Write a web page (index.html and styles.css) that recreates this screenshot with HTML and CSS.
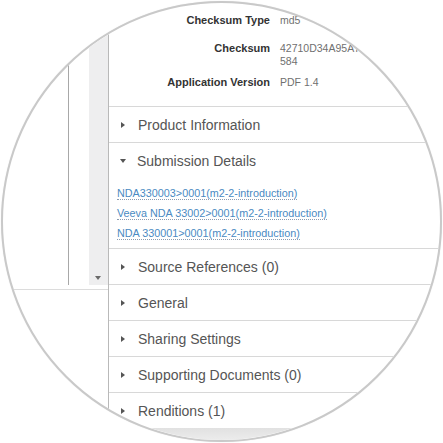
FILE: index.html
```html
<!DOCTYPE html>
<html>
<head>
<meta charset="utf-8">
<link rel="stylesheet" href="styles.css">
</head>
<body>
<div class="lens">
  <div class="page">
    <div class="sidebar">
      <div class="tree-space"></div>
      <div class="tree-line"></div>
      <div class="tree-gap"></div>
      <div class="scrollbar"><span class="arrow-down"></span></div>
    </div>
    <div class="panel">
      <div class="props">
        <div class="prop prop-first">
          <div class="label">Checksum Type</div>
          <div class="value">md5</div>
        </div>
        <div class="prop prop-second">
          <div class="label">Checksum</div>
          <div class="value">42710D34A95A7F3C0B9E81D2A6C45E<br>584</div>
        </div>
        <div class="prop">
          <div class="label">Application Version</div>
          <div class="value">PDF 1.4</div>
        </div>
      </div>
      <div class="section"><span class="tri-right"></span><span class="sec-title">Product Information</span></div>
      <div class="section section-open"><span class="tri-down"></span><span class="sec-title">Submission Details</span></div>
      <div class="links">
        <div class="link-line"><a class="link">NDA330003&gt;0001(m2-2-introduction)</a></div>
        <div class="link-line"><a class="link">Veeva NDA 33002&gt;0001(m2-2-introduction)</a></div>
        <div class="link-line"><a class="link">NDA 330001&gt;0001(m2-2-introduction)</a></div>
      </div>
      <div class="section"><span class="tri-right"></span><span class="sec-title">Source References (0)</span></div>
      <div class="section"><span class="tri-right"></span><span class="sec-title">General</span></div>
      <div class="section"><span class="tri-right"></span><span class="sec-title">Sharing Settings</span></div>
      <div class="section"><span class="tri-right"></span><span class="sec-title">Supporting Documents (0)</span></div>
      <div class="section section-last"><span class="tri-right"></span><span class="sec-title">Renditions (1)</span></div>
    </div>
  </div>
  <div class="footer"></div>
</div>
</body>
</html>
```
FILE: styles.css
```css
html, body {
  margin: 0;
  padding: 0;
  background: #ffffff;
}
body {
  width: 443px;
  height: 443px;
  overflow: hidden;
  font-family: "Liberation Sans", Arial, sans-serif;
}
.lens {
  margin: 1px 0 0 1px;
  width: 437px;
  height: 437px;
  border: 2px solid #c9c9c9;
  border-radius: 50%;
  overflow: hidden;
  background: #ffffff;
  box-shadow: 0 0 1px rgba(0, 0, 0, 0.12);
  display: flex;
  flex-direction: column;
}
.page {
  display: flex;
  flex: none;
}
.sidebar {
  width: 105px;
  height: 282px;
  padding-bottom: 4px;
  border-bottom: 1px solid #dcdcdc;
  display: flex;
  align-self: flex-start;
  flex: none;
}
.tree-space {
  width: 65px;
}
.tree-line {
  width: 1px;
  background: #a8a8a8;
}
.tree-gap {
  width: 20px;
}
.scrollbar {
  width: 19px;
  background: #eeeeef;
  display: flex;
  flex-direction: column;
  justify-content: flex-end;
  align-items: center;
  padding-bottom: 5px;
  box-sizing: border-box;
}
.arrow-down {
  width: 0;
  height: 0;
  border-left: 3.5px solid transparent;
  border-right: 3.5px solid transparent;
  border-top: 4px solid #6a6a6a;
  margin-left: -2px;
}
.panel {
  flex: 1;
  border-left: 1px solid #b9b9b9;
  min-width: 0;
}
.props {
  padding: 11px 0 17px 0;
  border-bottom: 1px solid #d8d8d8;
}
.prop {
  display: flex;
  gap: 10px;
  line-height: 13px;
  margin-top: 8px;
}
.prop-first {
  margin-top: 0;
}
.prop-second {
  margin-top: 15px;
}
.label {
  width: 161px;
  flex: none;
  text-align: right;
  font-weight: bold;
  font-size: 11px;
  color: #333333;
}
.value {
  font-size: 10.5px;
  color: #707070;
  white-space: nowrap;
}
.section {
  height: 35px;
  display: flex;
  align-items: center;
  border-bottom: 1px solid #d8d8d8;
  padding-left: 12px;
}
.section-open {
  border-bottom: none;
  padding-left: 11px;
}
.section-last {
  border-bottom: none;
}
.tri-right {
  width: 0;
  height: 0;
  border-top: 3.5px solid transparent;
  border-bottom: 3.5px solid transparent;
  border-left: 4px solid #555555;
  margin-right: 13px;
}
.tri-down {
  width: 0;
  height: 0;
  border-left: 3.5px solid transparent;
  border-right: 3.5px solid transparent;
  border-top: 4px solid #555555;
  margin-right: 11px;
}
.sec-title {
  font-size: 14px;
  color: #555555;
}
.links {
  padding: 4px 0 6px 8px;
  border-bottom: 1px solid #d8d8d8;
}
.link-line {
  height: 20px;
  line-height: 20px;
}
.link {
  font-size: 10.8px;
  color: #4a8ac2;
  text-decoration: none;
  border-bottom: 1px dotted #8a9bb0;
  line-height: 12px;
  display: inline-block;
}
.footer {
  flex: 1;
  background: linear-gradient(#e1e1e1, #ececec);
}
```
